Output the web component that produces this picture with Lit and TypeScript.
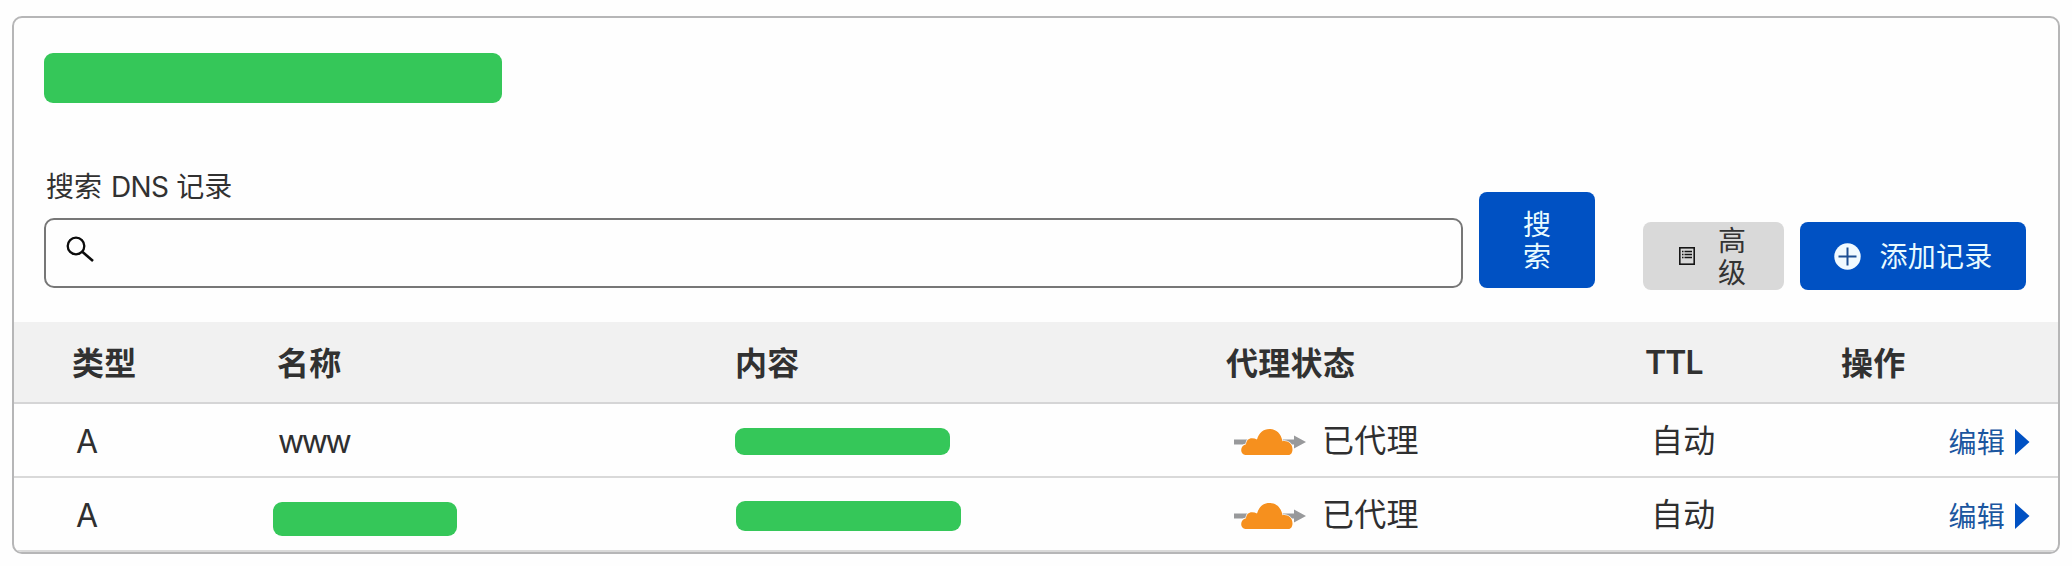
import { LitElement, html, css } from "lit";
import { customElement, property } from "lit/decorators.js";

interface DnsRecord {
  type: string;
  name: string;
  nameMask?: string;
  contentMask: string;
}

const RECORDS: DnsRecord[] = [
  { type: "A", name: "www", contentMask: "mask-content-a" },
  { type: "A", name: "", nameMask: "mask-name", contentMask: "mask-content-b" },
];

const proxiedCloud = html`<svg class="cloud" viewBox="0 0 72 28" width="72" height="28">
  <path d="M0 11.6H60V7.4L72 14L60 20.6V16.4H0Z" fill="#98999b" />
  <path
    d="M12.2 27C9 27 7.200 24.800 7.200 22C7.200 19 9.200 16.800 12 16.200C12.300 12.400 14.500 10.200 18 10.200C19.800 10.200 21.500 10.600 23 11.400C25 4.800 29.200 1 35.500 1C42.200 1 47 5.200 48.500 13.200C53.800 12.200 58.500 15.800 58.500 21.200C58.500 24.500 57 27 54.500 27Z"
    fill="#f6901e" stroke="#fff" stroke-width="1.400" paint-order="stroke"
  />
</svg>`;

@customElement("dns-row")
export class DnsRow extends LitElement {
  @property({ attribute: false }) record!: DnsRecord;

  static styles = css`
    :host { display: block; border-bottom: 2px solid #d9d9d9; }
    .row {
      display: grid;
      grid-template-columns: 200px 462px 492px 418px 200px 1fr;
      align-items: center;
      height: 72px;
      padding: 0 28px 0 62px;
      color: #2f2f30;
      font-size: 32px;
      line-height: 40px;
    }
    .latin { margin-top: 3px; }
    .name { padding-left: 2px; letter-spacing: -2.400px; }
    .status { display: flex; align-items: center; gap: 16px; padding-left: 4px; }
    .cloud { flex: none; margin-top: 4px; }
    .ttl { padding-left: 3px; }
    .cjk { margin-top: 1px; letter-spacing: 0.300px; }
    .edit {
      display: flex; align-items: center; justify-content: flex-end; gap: 10px;
      color: #1b569f; font-size: 28px; letter-spacing: 0.300px;
    }
    .edit span { margin-top: 5px; }
    .caret { flex: none; margin-top: 4px; }
    .mask { border-radius: 9px; background: #35c759; }
    .mask-content-a { width: 215px; height: 27px; margin: 3px 0 0 -3.500px; }
    .mask-content-b { width: 225px; height: 30px; margin: 4px 0 0 -2px; }
    .mask-name { width: 184px; height: 34px; margin: 6px 0 0 -5px; }
  `;

  render() {
    const r = this.record;
    return html`<div class="row">
      <div class="latin">${r.type}</div>
      <div class="latin name">${r.nameMask ? html`<div class="mask ${r.nameMask}"></div>` : r.name}</div>
      <div><div class="mask ${r.contentMask}"></div></div>
      <div class="status">${proxiedCloud}<span class="cjk">已代理</span></div>
      <div class="ttl cjk">自动</div>
      <div class="edit">
        <span>编辑</span>
        <svg class="caret" width="15" height="26" viewBox="0 0 15 26"><path d="M0 0L14.500 13L0 26Z" fill="#0051c3" /></svg>
      </div>
    </div>`;
  }
}

@customElement("app-root")
export class AppRoot extends LitElement {
  static styles = css`
    :host {
      display: block;
      box-sizing: border-box;
      height: 566px;
      padding: 16px 12px 12px;
      background: #fefefe;
      color: #313131;
      font-family: Inter, "Noto Sans CJK SC", sans-serif;
    }
    .card {
      box-sizing: border-box;
      height: 538px;
      border: 2px solid #b6b6b7;
      border-radius: 10px;
      overflow: hidden;
      background: #fefefe;
    }
    .top { box-sizing: border-box; height: 304px; padding: 35px 32px 0 30px; }
    .mask { width: 458px; height: 50px; border-radius: 9px; background: #35c759; }
    .tools { display: flex; align-items: flex-end; height: 185px; }
    .search { width: 1419px; }
    .label { display: block; padding-left: 2px; margin-bottom: 11px; font-size: 28px; line-height: 40px; }
    .dns { letter-spacing: -0.600px; margin-left: 1px; }
    .field {
      box-sizing: border-box;
      display: flex; align-items: flex-start;
      height: 70px;
      padding: 16px 19px;
      border: 2px solid #777;
      border-radius: 10px;
    }
    .button {
      box-sizing: border-box;
      display: flex; align-items: center; justify-content: center;
      border-radius: 8px;
      font-size: 28px;
      line-height: 32px;
    }
    .primary { background: #0051c3; color: #e9fbff; }
    .go { width: 116px; height: 96px; margin-left: 16px; padding-top: 1px; }
    .stack { width: 28px; }
    .advanced {
      width: 141px; height: 68px; margin: 0 0 -2px 48px;
      justify-content: flex-start; gap: 23px; padding-left: 36px;
      background: #d9d9d9; color: #333;
    }
    .advanced .stack { padding-top: 1px; }
    .add { width: 226px; height: 68px; margin: 0 0 -2px 16px; gap: 18px; padding-left: 1px; letter-spacing: 0.300px; }
    .add span { padding-top: 1px; }
    .head {
      display: grid;
      grid-template-columns: 205px 458px 491px 419px 196px 1fr;
      align-items: center;
      box-sizing: border-box;
      height: 82px;
      padding: 0 0 2px 58px;
      border-bottom: 2px solid #d5d5d6;
      background: #f1f1f1;
      font-size: 32px;
      font-weight: 600;
      letter-spacing: 0.300px;
    }
    .head .latin { padding-top: 3px; letter-spacing: -0.900px; }
  `;

  render() {
    return html`<div class="card">
      <div class="top">
        <div class="mask"></div>
        <div class="tools">
          <div class="search">
            <span class="label">搜索 <span class="dns">DNS</span> 记录</span>
            <div class="field">
              <svg width="30" height="28" viewBox="0 0 30 28" fill="none" stroke="#0c0c0c" stroke-width="2.300">
                <circle cx="11" cy="10" r="8.300" /><path d="M17 15.500L28 25" stroke-width="2.600" />
              </svg>
            </div>
          </div>
          <div class="button primary go"><span class="stack">搜索</span></div>
          <div class="button advanced">
            <svg width="16" height="18" viewBox="0 0 16 18" fill="none" stroke="#161616">
              <rect x="0.800" y="0.800" width="14.400" height="16.400" stroke-width="1.600" />
              <path d="M3 4.500H4.500M5.500 4.500H13M3 7.500H4.500M5.500 7.500H13M3 10.500H4.500M5.500 10.500H13" stroke-width="1.500" />
            </svg>
            <span class="stack">高级</span>
          </div>
          <div class="button primary add">
            <svg width="27" height="27" viewBox="0 0 27 27">
              <circle cx="13.500" cy="13.500" r="13.200" fill="#f1faff" />
              <path d="M13.500 4.500V22.500M4.500 13.500H22.500" stroke="#1d4f93" stroke-width="2" />
            </svg>
            <span>添加记录</span>
          </div>
        </div>
      </div>
      <div class="head">
        <div>类型</div><div>名称</div><div>内容</div><div>代理状态</div><div class="latin">TTL</div><div>操作</div>
      </div>
      ${RECORDS.map((r) => html`<dns-row .record=${r}></dns-row>`)}
    </div>`;
  }
}
